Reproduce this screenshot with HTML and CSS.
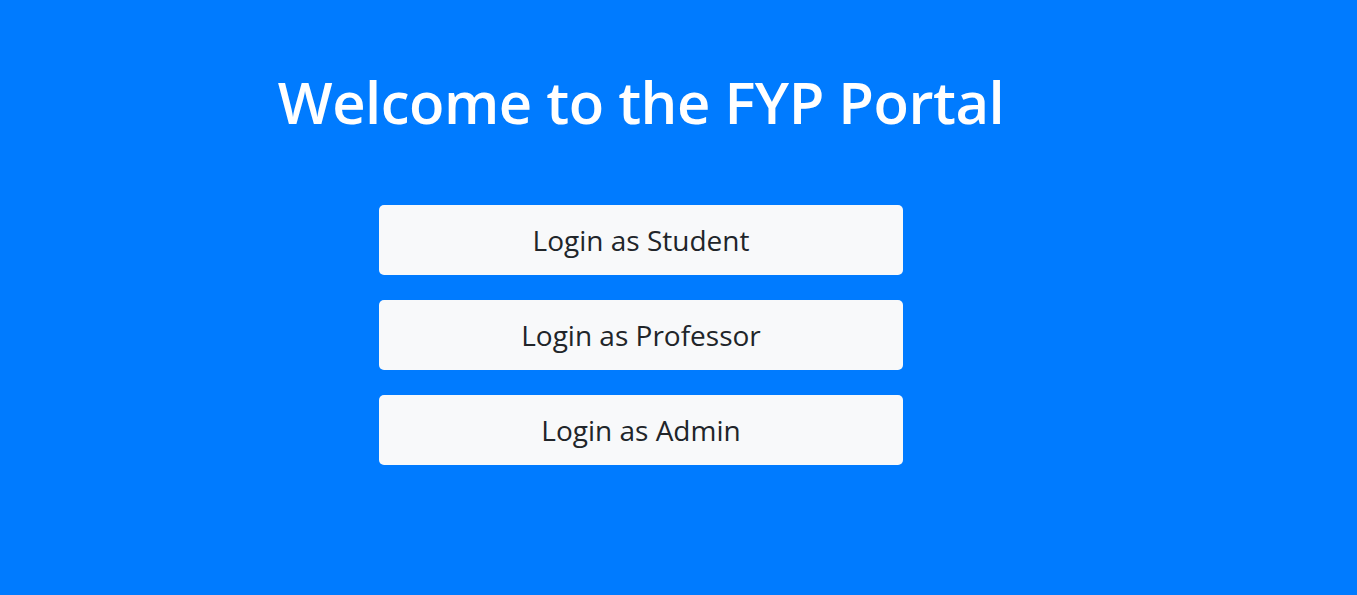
FILE: index.html
```html
<!DOCTYPE html>
<html lang="en">
<head>
<meta charset="utf-8">
<title>FYP Portal</title>
<link rel="stylesheet" href="styles.css">
</head>
<body>
<main class="portal">
  <h1 class="portal-title">Welcome to the FYP Portal</h1>
  <div class="login-list">
    <button class="login-btn" type="button">Login as Student</button>
    <button class="login-btn" type="button">Login as Professor</button>
    <button class="login-btn" type="button">Login as Admin</button>
  </div>
</main>
</body>
</html>
```

FILE: styles.css
```css
html, body {
  margin: 0;
  height: 100%;
}
body {
  background: #007bff;
  font-family: "Open Sans", "Noto Sans", sans-serif;
  color: #212529;
}
.portal {
  width: 1282px;
  display: flex;
  flex-direction: column;
  align-items: center;
  padding-top: 60px;
}
.portal-title {
  margin: 0;
  color: #fff;
  font-weight: 600;
  font-size: 58px;
  line-height: 84px;
  letter-spacing: -0.5px;
}
.login-list {
  margin-top: 61px;
  display: flex;
  flex-direction: column;
  gap: 25px;
}
.login-btn {
  width: 524px;
  height: 70px;
  padding: 0;
  border: none;
  border-radius: 5px;
  background: #f8f9fa;
  color: #212529;
  font-family: inherit;
  font-size: 28px;
  cursor: pointer;
}
```
